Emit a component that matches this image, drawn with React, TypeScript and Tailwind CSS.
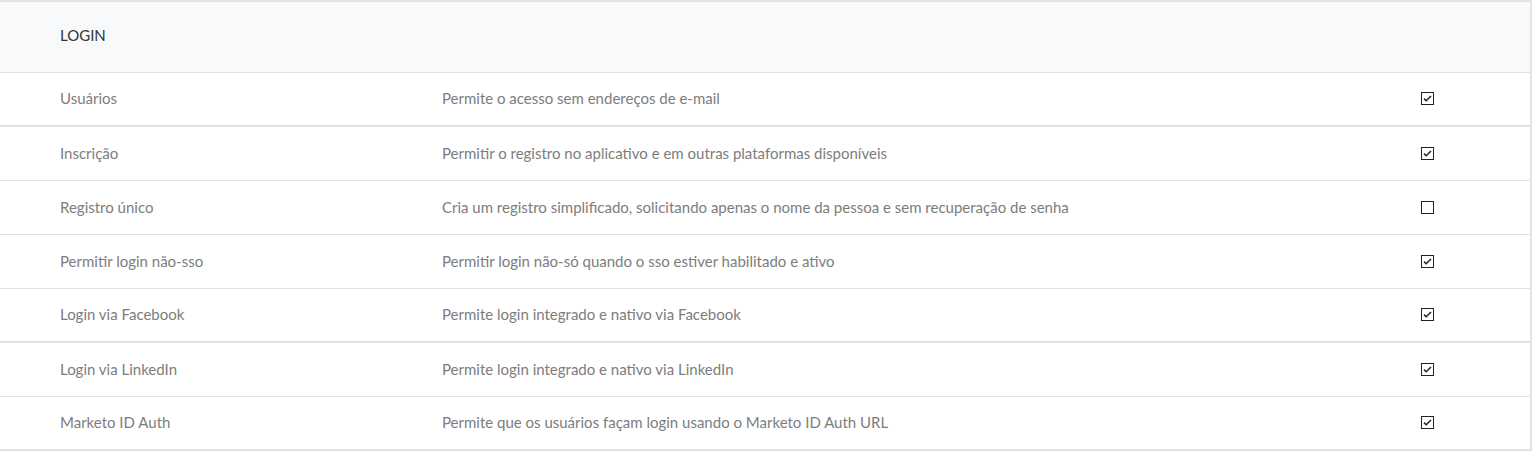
import React from "react";

const rows: { label: string; desc: string; checked: boolean; thick?: boolean }[] = [
  { label: "Usuários", desc: "Permite o acesso sem endereços de e-mail", checked: true, thick: true },
  { label: "Inscrição", desc: "Permitir o registro no aplicativo e em outras plataformas disponíveis", checked: true },
  { label: "Registro único", desc: "Cria um registro simplificado, solicitando apenas o nome da pessoa e sem recuperação de senha", checked: false },
  { label: "Permitir login não-sso", desc: "Permitir login não-só quando o sso estiver habilitado e ativo", checked: true },
  { label: "Login via Facebook", desc: "Permite login integrado e nativo via Facebook", checked: true, thick: true },
  { label: "Login via LinkedIn", desc: "Permite login integrado e nativo via LinkedIn", checked: true },
  { label: "Marketo ID Auth", desc: "Permite que os usuários façam login usando o Marketo ID Auth URL", checked: true, thick: true },
];

function Check({ checked }: { checked: boolean }) {
  return (
    <svg width="13" height="13" viewBox="0 0 13 13" className="block">
      <rect x="0.5" y="0.5" width="12" height="12" fill="#fff" stroke="#222" strokeWidth="1" />
      {checked && (
        <path d="M3 6.6 L5.2 8.8 L10 4" fill="none" stroke="#222" strokeWidth="1.5" />
      )}
    </svg>
  );
}

export default function App() {
  return (
    <div className="w-[1532px] bg-white border-t-2 border-r-2 border-[#e3e3e3] font-['Lato',_'Open_Sans',_sans-serif]">
      <div className="h-[71px] bg-[#f8f9fb] border-b border-[#e1e1e1] flex items-center pl-[60px] pb-[3px] text-[#333] text-[15px]">
        LOGIN
      </div>
      {rows.map((r, i) => (
        <div
          key={i}
          className={`h-[54px] flex items-center pl-[60px] pr-[96px] pb-[1px] text-[#7d7d7d] text-[15px] ${
            r.thick ? "border-b-2 border-[#e1e1e1]" : "border-b border-[#e1e1e1]"
          }`}
        >
          <div className="w-[382px] shrink-0">{r.label}</div>
          <div className="flex-1">{r.desc}</div>
          <Check checked={r.checked} />
        </div>
      ))}
    </div>
  );
}
